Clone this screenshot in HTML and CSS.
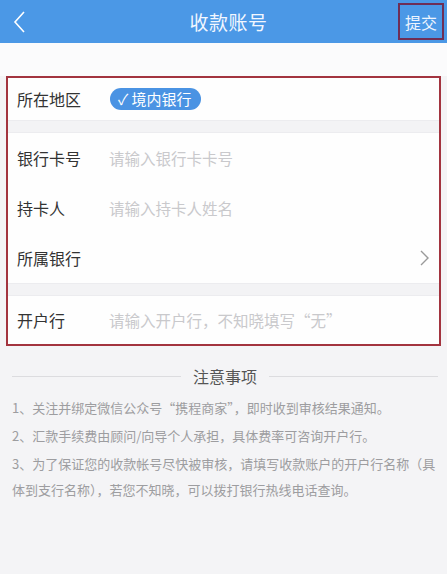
FILE: index.html
```html
<!DOCTYPE html>
<html lang="zh-CN">

<head>
    <meta charset="UTF-8">
    <meta name="viewport" content="width=device-width, initial-scale=1.0">
    <title>收款账号</title>
    <link rel="stylesheet" href="styles.css">
</head>

<body>

    <!-- Top bar -->
    <header class="topbar">
        <span class="back">
            <svg width="14" height="24" viewBox="0 0 14 24">
                <path d="M11 2 L2 12 L11 22" fill="none" stroke="#ffffff" stroke-width="1.6" />
            </svg>
        </span>
        <h1 class="title">收款账号</h1>
        <span class="submit">提交</span>
    </header>

    <div class="spacer"></div>

    <!-- Account form -->
    <div class="form-card">
        <div class="row">
            <span class="label">所在地区</span>
            <span class="chip">✓ 境内银行</span>
        </div>
        <div class="gap"></div>
        <div class="row tall">
            <span class="label">银行卡号</span>
            <span class="placeholder">请输入银行卡卡号</span>
        </div>
        <div class="row tall">
            <span class="label">持卡人</span>
            <span class="placeholder">请输入持卡人姓名</span>
        </div>
        <div class="row tall">
            <span class="label">所属银行</span>
            <span class="arrow">
                <svg width="9" height="16" viewBox="0 0 9 16">
                    <path d="M1 1 L8 8 L1 15" fill="none" stroke="#9a9a9a" stroke-width="1.4" />
                </svg>
            </span>
        </div>
        <div class="gap"></div>
        <div class="row tall">
            <span class="label">开户行</span>
            <span class="placeholder">请输入开户行，不知晓填写“无”</span>
        </div>
    </div>

    <!-- Notes -->
    <section class="notes">
        <div class="notes-title">
            <span class="line"></span>
            <span class="notes-text">注意事项</span>
            <span class="line"></span>
        </div>
        <p>1、关注并绑定微信公众号“携程商家”，即时收到审核结果通知。</p>
        <p>2、汇款手续费由顾问/向导个人承担，具体费率可咨询开户行。</p>
        <p>3、为了保证您的收款帐号尽快被审核，请填写收款账户的开户行名称（具体到支行名称），若您不知晓，可以拨打银行热线电话查询。</p>
    </section>

</body>

</html>
```

FILE: styles.css
```css
/* General Styles */
* {
    margin: 0;
    padding: 0;
    box-sizing: border-box;
}

body {
    font-family: 'Noto Sans CJK SC', 'Noto Sans', sans-serif;
    background-color: #f4f4f6;
    width: 447px;
    min-height: 574px;
}

/* Top bar */
.topbar {
    height: 43px;
    background-color: #4b98e6;
    display: flex;
    align-items: center;
    justify-content: space-between;
    padding: 0 3px 0 13px;
}

.back {
    display: flex;
    align-items: center;
    width: 60px;
}

.title {
    font-size: 19px;
    font-weight: normal;
    color: #f2f7ff;
    letter-spacing: 0.5px;
}

.submit {
    width: 46px;
    height: 37px;
    border: 2px solid #6f2e55;
    color: #eef5ff;
    font-size: 16px;
    display: flex;
    align-items: center;
    justify-content: center;
    margin-left: 14px;
}

.spacer {
    height: 33px;
    background-color: #fbfbfc;
}

/* Form */
.form-card {
    margin: 0 6px;
    border: 2px solid #a3343f;
    background-color: #ffffff;
}

.row {
    height: 42px;
    display: flex;
    align-items: center;
    padding: 0 10px 0 9px;
    background-color: #fefefe;
}

.row.tall {
    height: 50px;
}

.row:last-child {
    height: 48px;
}

.label {
    width: 92px;
    font-size: 16px;
    color: #333333;
}

.chip {
    background-color: #4a93e3;
    color: #ffffff;
    font-size: 15px;
    height: 22px;
    line-height: 22px;
    padding: 0 9px 0 8px;
    border-radius: 11px;
    margin-left: 1px;
}

.placeholder {
    font-size: 15.5px;
    color: #c9c9cc;
}

.arrow {
    margin-left: auto;
    display: flex;
    align-items: center;
}

.gap {
    height: 13px;
    background-color: #f3f3f5;
    border-top: 1px solid #ececef;
    border-bottom: 1px solid #ececef;
}

/* Notes */
.notes {
    padding: 18px 9px 0 12px;
}

.notes-title {
    display: flex;
    align-items: center;
    margin-bottom: 7px;
}

.line {
    flex: 1;
    height: 1px;
    background-color: #dcdcdf;
}

.notes-text {
    font-size: 16px;
    color: #555555;
    padding: 0 12px;
}

.notes p {
    font-size: 13px;
    color: #9d9da0;
    line-height: 26px;
    margin-bottom: 2px;
}
```
